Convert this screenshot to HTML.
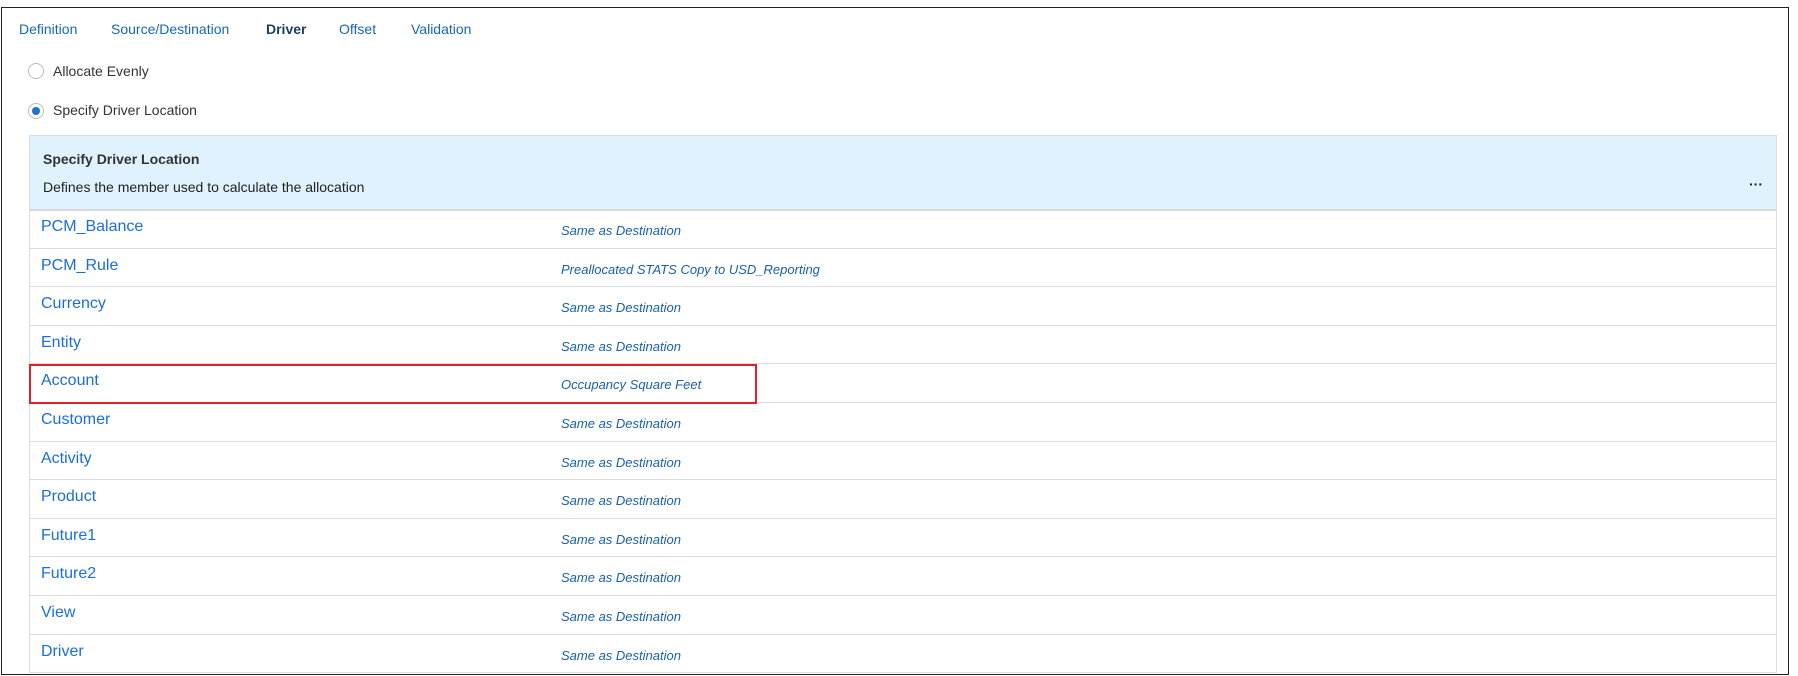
<!DOCTYPE html>
<html><head><style>
*{margin:0;padding:0;box-sizing:border-box}
body{width:1798px;height:676px;background:#fff;font-family:"Liberation Sans",sans-serif;position:relative;overflow:hidden}
.frame{position:absolute;left:1px;top:7px;width:1788px;height:668px;border:1.5px solid #222}
.tab{position:absolute;top:21px;font-size:14px;color:#1668b0}
.radio{position:absolute;left:28px;width:16px;height:16px;border:1px solid #bbb;border-radius:50%;background:#fff}
.radio.on::after{content:"";position:absolute;left:3px;top:3px;width:8px;height:8px;border-radius:50%;background:#1a73c9}
.rl{position:absolute;left:53px;font-size:14px;color:#333}
.hdr{position:absolute;left:29px;top:135px;width:1748px;height:76px;background:#e0f2fd;border:1px solid #dcdcdc;border-bottom:2px solid #d8d8d8}
.tbl{position:absolute;left:29px;top:210px;width:1748px;height:463px;border:1px solid #ddd;border-top:none}
.row{position:absolute;left:0;width:1746px;height:38.6px;border-bottom:1px solid #ddd}
.row .l{position:absolute;left:11px;top:8px;font-size:16px;color:#1a6ed8}
.row .v{position:absolute;left:531px;top:13px;font-size:13px;font-style:italic;color:#1a60a8}
.box{position:absolute;left:29px;top:364px;width:728px;height:40px;border:2.5px solid #e0202a}
</style></head><body>
<div class="frame"></div>
<div class="tab" style="left:19px">Definition</div>
<div class="tab" style="left:111px">Source/Destination</div>
<div class="tab" style="left:266px;font-weight:bold;color:#1d3f66">Driver</div>
<div class="tab" style="left:339px">Offset</div>
<div class="tab" style="left:411px">Validation</div>
<div class="radio" style="top:63px"></div><div class="rl" style="top:63px">Allocate Evenly</div>
<div class="radio on" style="top:103px"></div><div class="rl" style="top:102px">Specify Driver Location</div>
<div class="hdr">
<div style="position:absolute;left:13px;top:15px;font-size:14px;font-weight:bold;color:#333">Specify Driver Location</div>
<div style="position:absolute;left:13px;top:43px;font-size:14px;color:#222">Defines the member used to calculate the allocation</div>
<div style="position:absolute;left:1719px;top:40px;font-size:14px;font-weight:bold;color:#222">···</div>
</div>
<div class="tbl">
<div class="row" style="top:0"><span class="l">PCM_Balance</span><span class="v">Same as Destination</span></div>
<div class="row" style="top:38.6px"><span class="l">PCM_Rule</span><span class="v">Preallocated STATS Copy to USD_Reporting</span></div>
<div class="row" style="top:77.2px"><span class="l">Currency</span><span class="v">Same as Destination</span></div>
<div class="row" style="top:115.8px"><span class="l">Entity</span><span class="v">Same as Destination</span></div>
<div class="row" style="top:154.4px"><span class="l">Account</span><span class="v">Occupancy Square Feet</span></div>
<div class="row" style="top:193px"><span class="l">Customer</span><span class="v">Same as Destination</span></div>
<div class="row" style="top:231.6px"><span class="l">Activity</span><span class="v">Same as Destination</span></div>
<div class="row" style="top:270.2px"><span class="l">Product</span><span class="v">Same as Destination</span></div>
<div class="row" style="top:308.8px"><span class="l">Future1</span><span class="v">Same as Destination</span></div>
<div class="row" style="top:347.4px"><span class="l">Future2</span><span class="v">Same as Destination</span></div>
<div class="row" style="top:386px"><span class="l">View</span><span class="v">Same as Destination</span></div>
<div class="row" style="top:424.6px"><span class="l">Driver</span><span class="v">Same as Destination</span></div>
</div>
<div class="box"></div>
</body></html>
